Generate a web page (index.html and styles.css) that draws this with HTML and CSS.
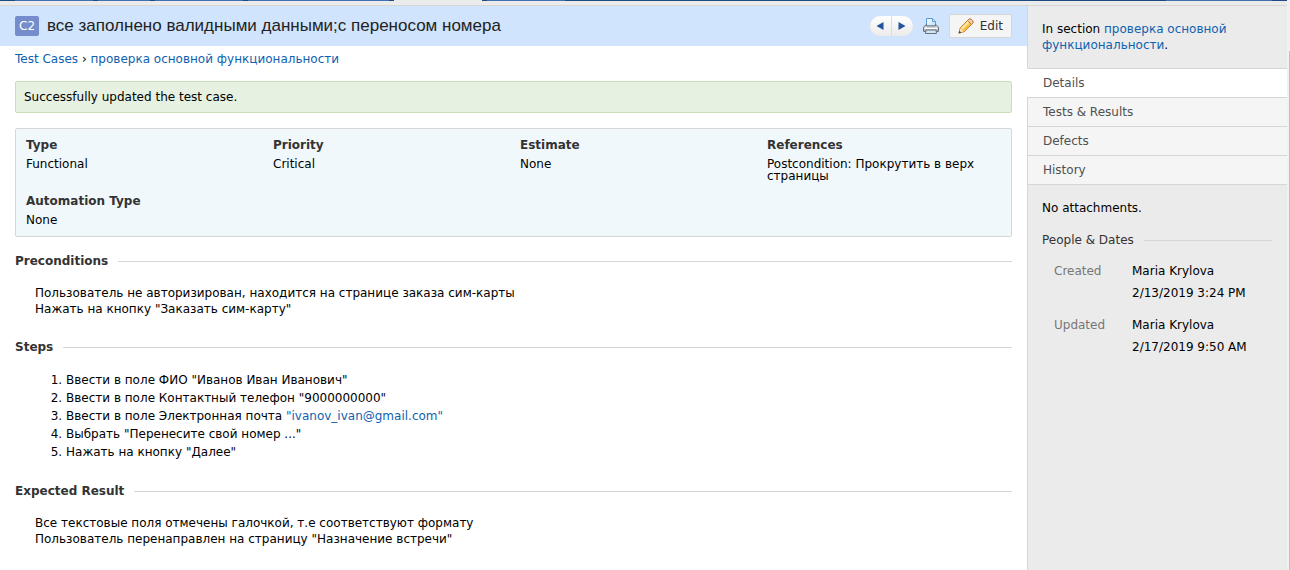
FILE: index.html
```html
<!DOCTYPE html>
<html lang="ru">
<head>
<meta charset="utf-8">
<meta name="viewport" content="width=device-width, initial-scale=1">
<title>C2 все заполнено валидными данными;с переносом номера</title>
<link rel="stylesheet" href="styles.css">
</head>
<body>
<div class="app">
  <div class="page">
    <div class="tabstrip">
      <span class="tab tab-s"></span><span class="tab tab-xs"></span><span class="tab tab-m"></span><span class="tab tab-l"></span><span class="tab tab-m tab-active"></span><span class="tab tab-s"></span><span class="tab tab-user"></span>
    </div>
    <div class="columns">
      <main class="main">
        <header class="header">
          <span class="case-id">C2</span>
          <h1 class="title">все заполнено валидными данными;с переносом номера</h1>
          <div class="pager">
            <button class="pager-btn" type="button" aria-label="Previous"><svg width="8" height="8" viewBox="0 0 8 8"><path d="M7.500 0v8L.5 4z" fill="#24539c"/></svg></button>
            <button class="pager-btn" type="button" aria-label="Next"><svg width="8" height="8" viewBox="0 0 8 8"><path d="M.5 0v8l7-4z" fill="#24539c"/></svg></button>
          </div>
          <button class="print" type="button" aria-label="Print">
            <svg width="16" height="16" viewBox="0 0 16 16">
              <defs>
                <linearGradient id="body" x1="0" y1="0" x2="0" y2="1"><stop offset="0" stop-color="#fafafa"/><stop offset="1" stop-color="#a0a4ac"/></linearGradient>
                <linearGradient id="paper" x1="0" y1="0" x2="1" y2="1"><stop offset="0" stop-color="#fff"/><stop offset="1" stop-color="#b8dcf8"/></linearGradient>
              </defs>
              <path d="M3.500 8V.5h6l3 3V8z" fill="url(#paper)" stroke="#5b9bd5"/>
              <path d="M9.500 1v2.500h3" fill="#e8f4fe" stroke="#5b9bd5"/>
              <path d="M3.500 6.500 1 8.500Q.5 9 .5 10v3q0 .5.5.5h14q.5 0 .5-.5v-3q0-1-.5-1.500l-2.500-2v1.500h-9z" fill="url(#body)" stroke="#6c7078"/>
              <path d="M1.500 10.500h13" stroke="#fff"/>
              <path d="M3 12h10l.5 3.500h-11z" fill="#cfe6fa" stroke="#6c7078"/>
            </svg>
          </button>
          <button class="edit" type="button">
            <svg width="16" height="16" viewBox="0 0 16 16">
              <defs><linearGradient id="wood" x1="0" y1="0" x2="1" y2="1"><stop offset="0" stop-color="#fff0a4"/><stop offset=".5" stop-color="#f8ca57"/><stop offset="1" stop-color="#e0962a"/></linearGradient></defs>
              <path d="M1 15l1.200-5L9.500 2.500l4 4L6 13.800z" fill="url(#wood)" stroke="#c88424"/>
              <path d="M9.500 2.500l1.300-1.300q1.200-1 2.400 0l1.600 1.600q1 1.200 0 2.400L13.500 6.500z" fill="#f6c9a0" stroke="#b97840"/>
              <path d="M2.500 10.500l3 3L1 15z" fill="#f9e3bd"/>
              <path d="M4 10.500l6.500-6.500" stroke="#fff3b8" stroke-width="1.500"/>
              <path d="M.5 15.500l.8-2.800 2 2z" fill="#4b4034"/>
            </svg>
            Edit
          </button>
        </header>
        <div class="content">
          <nav class="crumbs"><a href="#">Test Cases</a> › <a href="#">проверка основной функциональности</a></nav>
          <div class="message" role="status">Successfully updated the test case.</div>
          <dl class="fields">
            <div><dt>Type</dt><dd>Functional</dd></div>
            <div><dt>Priority</dt><dd>Critical</dd></div>
            <div><dt>Estimate</dt><dd>None</dd></div>
            <div><dt>References</dt><dd>Postcondition: Прокрутить в верх страницы</dd></div>
            <div><dt>Automation Type</dt><dd>None</dd></div>
          </dl>
          <section class="block">
            <h2 class="rule">Preconditions</h2>
            <p>Пользователь не авторизирован, находится на странице заказа сим-карты<br>Нажать на кнопку "Заказать сим-карту"</p>
          </section>
          <section class="block">
            <h2 class="rule">Steps</h2>
            <ol>
              <li>Ввести в поле ФИО "Иванов Иван Иванович"</li>
              <li>Ввести в поле Контактный телефон "9000000000"</li>
              <li>Ввести в поле Электронная почта <a href="#">"ivanov_ivan@gmail.com"</a></li>
              <li>Выбрать "Перенесите свой номер ..."</li>
              <li>Нажать на кнопку "Далее"</li>
            </ol>
          </section>
          <section class="block">
            <h2 class="rule">Expected Result</h2>
            <p>Все текстовые поля отмечены галочкой, т.е соответствуют формату<br>Пользователь перенаправлен на страницу "Назначение встречи"</p>
          </section>
        </div>
      </main>
      <aside class="sidebar">
        <p class="section-note">In section <a href="#">проверка основной функциональности</a>.</p>
        <nav class="side-nav">
          <a class="current" href="#">Details</a>
          <a href="#">Tests &amp; Results</a>
          <a href="#">Defects</a>
          <a href="#">History</a>
        </nav>
        <div class="side-body">
          <p class="attachments">No attachments.</p>
          <h2 class="rule">People &amp; Dates</h2>
          <dl class="people">
            <dt>Created</dt><dd>Maria Krylova<br>2/13/2019 3:24 PM</dd>
            <dt>Updated</dt><dd>Maria Krylova<br>2/17/2019 9:50 AM</dd>
          </dl>
        </div>
      </aside>
    </div>
  </div>
  <div class="scroll-edge"><div class="scroll-thumb"></div></div>
</div>
</body>
</html>
```
FILE: styles.css
```css
* { box-sizing: border-box; }
body {
  margin: 0;
  background: #fff;
  color: #000;
  font: 12px/16px Verdana, "DejaVu Sans", sans-serif;
}
h1, h2, p, dl, dd, ol { margin: 0; }
a { color: #0e62b0; text-decoration: none; }
button { font: inherit; cursor: pointer; }

.app { display: flex; min-height: 100vh; }
.page { flex: 1; display: flex; flex-direction: column; min-width: 0; }

.tabstrip {
  display: flex;
  gap: 5px;
  height: 1px;
  padding: 0 15px;
  background: #1f4a7d;
}
.tab { background: #3f70b0; }
.tab-xs { width: 52px; }
.tab-s { width: 78px; }
.tab-m { width: 88px; }
.tab-l { width: 141px; }
.tab-active { background: #ebebeb; }
.tab-user { width: 106px; margin-left: auto; }

.columns {
  flex: 1;
  display: flex;
  margin-top: 4px;
  border-top: 1px solid #d6d6d6;
  box-shadow: 0 -4px #ebebeb;
}
.main { flex: 1; min-width: 0; }
.header {
  display: flex;
  align-items: center;
  height: 40px;
  padding: 0 15px;
  background: #d0e4fd;
}
.case-id {
  padding: 2px 4px;
  border-radius: 2px;
  background: #758ccd;
  color: #fff;
}
.title {
  flex: 1;
  margin-left: 8px;
  color: #222;
  font: 17px/20px "Liberation Sans", Arial, sans-serif;
}
.pager {
  display: flex;
  gap: 1px;
  border-radius: 10px;
  background: #dcdcdc;
  overflow: hidden;
}
.pager-btn {
  display: flex;
  align-items: center;
  justify-content: center;
  width: 21px;
  height: 20px;
  padding: 0;
  border: 0;
  background: linear-gradient(#fff, #ebebeb);
}
.print {
  display: flex;
  margin: 0 10px;
  padding: 0;
  border: 0;
  background: none;
}
.edit {
  display: flex;
  align-items: center;
  gap: 6px;
  height: 24px;
  padding: 0 8px;
  border: 1px solid #d6d6d6;
  border-radius: 2px;
  background: #f5f5f5;
  color: #333;
}

.content { padding: 5px 15px 16px; }
.message {
  margin-top: 14px;
  padding: 7px 8px;
  border: 1px solid #c8dfba;
  border-radius: 2px;
  background: #e6f1e1;
}
.fields {
  display: grid;
  grid-template-columns: repeat(4, 1fr);
  gap: 13px;
  margin-top: 15px;
  padding: 10px;
  border: 1px solid #d6d6d6;
  border-radius: 2px;
  background: #f1f8fc;
  line-height: 12px;
}
.fields dt { margin-bottom: 7px; color: #333; font-weight: bold; }
.rule {
  display: flex;
  align-items: center;
  gap: 10px;
  color: #333;
  font-size: 12px;
}
.rule::after { content: ""; flex: 1; height: 1px; background: #d6d6d6; }
.block { margin-top: 16px; }
.block p { padding: 16px 20px 6px; }
.block ol { padding: 16px 0 6px 51px; line-height: 18px; }

.sidebar {
  width: 260px;
  border-left: 1px solid #d6d6d6;
  background: #ebebeb;
}
.section-note { padding: 15px 14px; }
.side-nav { margin-left: -1px; border-bottom: 1px solid #d6d6d6; }
.side-nav a {
  display: block;
  padding: 6px 15px;
  border-top: 1px solid #d6d6d6;
  border-left: 1px solid #d6d6d6;
  background: #f5f5f5;
  color: #505050;
}
.side-nav .current { border-left-color: #fff; background: #fff; }
.side-body { padding: 15px 15px 15px 14px; }
.side-body .rule { margin-top: 16px; font-weight: normal; }
.people {
  display: grid;
  grid-template-columns: 78px 1fr;
  gap: 10px 0;
  margin-top: 12px;
  padding-left: 12px;
  line-height: 22px;
}
.people dt { color: #777; }

.scroll-edge { width: 3px; padding: 51px 0 0 2px; background: #f1f1f1; }
.scroll-thumb { height: 100%; background: #c1c1c1; }
```
